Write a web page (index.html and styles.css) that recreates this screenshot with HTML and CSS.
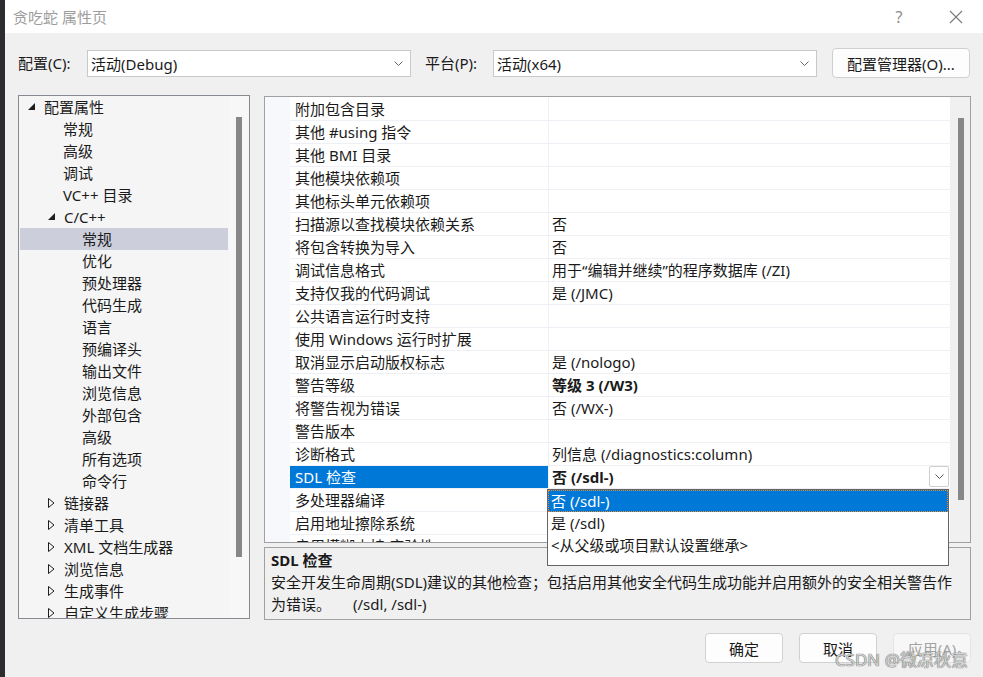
FILE: index.html
```html
<!DOCTYPE html>
<html>
<head>
    <meta charset="UTF-8">
    <title>贪吃蛇 属性页</title>
    <link rel="stylesheet" href="styles.css">
</head>
<body>
<div class="screen">
    <div class="edge"></div>
    <div class="dialog">
        <div class="titlebar">
            <span class="title">贪吃蛇 属性页</span>
            <span class="tb-btn tb-help">?</span>
            <span class="tb-btn tb-close">
                <svg width="14" height="14" viewBox="0 0 14 14"><path d="M1 1 L13 13 M13 1 L1 13" stroke="#7a7a7a" stroke-width="1.1" fill="none"/></svg>
            </span>
        </div>

        <div class="content">
            <div class="config-row">
                <span class="lbl">配置(C):</span>
                <div class="combo">
                    <span class="combo-text">活动(Debug)</span>
                    <svg class="chev" width="9" height="5" viewBox="0 0 9 5"><path d="M0.5 0.5 L4.5 4.5 L8.5 0.5" stroke="#666" fill="none"/></svg>
                </div>
                <span class="lbl lbl-platform">平台(P):</span>
                <div class="combo">
                    <span class="combo-text">活动(x64)</span>
                    <svg class="chev" width="9" height="5" viewBox="0 0 9 5"><path d="M0.5 0.5 L4.5 4.5 L8.5 0.5" stroke="#666" fill="none"/></svg>
                </div>
                <button class="btn btn-manager">配置管理器(O)...</button>
            </div>

            <div class="panels">
                <!-- left tree -->
                <div class="tree">
                    <div class="tree-list">
                        <div class="item lv1"><span class="twisty"><svg width="8" height="8" viewBox="0 0 8 8"><path d="M7 0 L7 7 L0 7 Z" fill="#1e1e1e"/></svg></span>配置属性</div>
                        <div class="item lv2">常规</div>
                        <div class="item lv2">高级</div>
                        <div class="item lv2">调试</div>
                        <div class="item lv2">VC++ 目录</div>
                        <div class="item lv2x"><span class="twisty"><svg width="8" height="8" viewBox="0 0 8 8"><path d="M7 0 L7 7 L0 7 Z" fill="#1e1e1e"/></svg></span>C/C++</div>
                        <div class="item lv3 selected">常规</div>
                        <div class="item lv3">优化</div>
                        <div class="item lv3">预处理器</div>
                        <div class="item lv3">代码生成</div>
                        <div class="item lv3">语言</div>
                        <div class="item lv3">预编译头</div>
                        <div class="item lv3">输出文件</div>
                        <div class="item lv3">浏览信息</div>
                        <div class="item lv3">外部包含</div>
                        <div class="item lv3">高级</div>
                        <div class="item lv3">所有选项</div>
                        <div class="item lv3">命令行</div>
                        <div class="item lv2x"><span class="twisty"><svg width="7" height="10" viewBox="0 0 7 10"><path d="M0.5 0.5 L6 5 L0.5 9.5 Z" fill="none" stroke="#1e1e1e"/></svg></span>链接器</div>
                        <div class="item lv2x"><span class="twisty"><svg width="7" height="10" viewBox="0 0 7 10"><path d="M0.5 0.5 L6 5 L0.5 9.5 Z" fill="none" stroke="#1e1e1e"/></svg></span>清单工具</div>
                        <div class="item lv2x"><span class="twisty"><svg width="7" height="10" viewBox="0 0 7 10"><path d="M0.5 0.5 L6 5 L0.5 9.5 Z" fill="none" stroke="#1e1e1e"/></svg></span>XML 文档生成器</div>
                        <div class="item lv2x"><span class="twisty"><svg width="7" height="10" viewBox="0 0 7 10"><path d="M0.5 0.5 L6 5 L0.5 9.5 Z" fill="none" stroke="#1e1e1e"/></svg></span>浏览信息</div>
                        <div class="item lv2x"><span class="twisty"><svg width="7" height="10" viewBox="0 0 7 10"><path d="M0.5 0.5 L6 5 L0.5 9.5 Z" fill="none" stroke="#1e1e1e"/></svg></span>生成事件</div>
                        <div class="item lv2x"><span class="twisty"><svg width="7" height="10" viewBox="0 0 7 10"><path d="M0.5 0.5 L6 5 L0.5 9.5 Z" fill="none" stroke="#1e1e1e"/></svg></span>自定义生成步骤</div>
                    </div>
                    <div class="vscroll tree-scroll"><div class="thumb"></div></div>
                </div>

                <!-- right side -->
                <div class="right">
                    <div class="grid">
                        <div class="gutter"></div>
                        <div class="rows">
                            <div class="row"><div class="name">附加包含目录</div><div class="value"></div></div>
                            <div class="row"><div class="name">其他 #using 指令</div><div class="value"></div></div>
                            <div class="row"><div class="name">其他 BMI 目录</div><div class="value"></div></div>
                            <div class="row"><div class="name">其他模块依赖项</div><div class="value"></div></div>
                            <div class="row"><div class="name">其他标头单元依赖项</div><div class="value"></div></div>
                            <div class="row"><div class="name">扫描源以查找模块依赖关系</div><div class="value">否</div></div>
                            <div class="row"><div class="name">将包含转换为导入</div><div class="value">否</div></div>
                            <div class="row"><div class="name">调试信息格式</div><div class="value">用于“编辑并继续”的程序数据库 (/ZI)</div></div>
                            <div class="row"><div class="name">支持仅我的代码调试</div><div class="value">是 (/JMC)</div></div>
                            <div class="row"><div class="name">公共语言运行时支持</div><div class="value"></div></div>
                            <div class="row"><div class="name">使用 Windows 运行时扩展</div><div class="value"></div></div>
                            <div class="row"><div class="name">取消显示启动版权标志</div><div class="value">是 (/nologo)</div></div>
                            <div class="row"><div class="name">警告等级</div><div class="value bold">等级 3 (/W3)</div></div>
                            <div class="row"><div class="name">将警告视为错误</div><div class="value">否 (/WX-)</div></div>
                            <div class="row"><div class="name">警告版本</div><div class="value"></div></div>
                            <div class="row"><div class="name">诊断格式</div><div class="value">列信息 (/diagnostics:column)</div></div>
                            <div class="row active">
                                <div class="name">SDL 检查</div>
                                <div class="value bold">
                                    <span class="value-text">否 (/sdl-)</span>
                                    <span class="drop-btn"><svg width="9" height="5" viewBox="0 0 9 5"><path d="M0.5 0.5 L4.5 4.5 L8.5 0.5" stroke="#555" fill="none"/></svg></span>
                                </div>
                            </div>
                            <div class="row"><div class="name">多处理器编译</div><div class="value"></div></div>
                            <div class="row"><div class="name">启用地址擦除系统</div><div class="value"></div></div>
                            <div class="row"><div class="name">启用模糊支持(实验性)</div><div class="value"></div></div>
                        </div>
                        <div class="vscroll grid-scroll"><div class="thumb"></div></div>
                    </div>

                    <div class="help">
                        <div class="help-title">SDL 检查</div>
                        <div class="help-text">安全开发生命周期(SDL)建议的其他检查；包括启用其他安全代码生成功能并启用额外的安全相关警告作</div>
                        <div class="help-text">为错误。<span class="tab"></span>(/sdl, /sdl-)</div>
                    </div>

                    <div class="drop-list">
                        <div class="opt picked">否 (/sdl-)</div>
                        <div class="opt">是 (/sdl)</div>
                        <div class="opt">&lt;从父级或项目默认设置继承&gt;</div>
                    </div>
                </div>
            </div>

            <div class="actions">
                <button class="btn btn-act">确定</button>
                <button class="btn btn-act">取消</button>
                <button class="btn btn-act disabled">应用(A)</button>
            </div>
        </div>
    </div>
    <div class="watermark">CSDN @微凉秋意</div>
</div>
</body>
</html>
```

FILE: styles.css
```css
* {
    box-sizing: border-box;
}

html, body {
    margin: 0;
    padding: 0;
}

body {
    width: 983px;
    height: 677px;
    overflow: hidden;
    background: #f0f0f0;
    color: #1a1a1a;
    font-family: "Noto Sans", "Noto Sans CJK SC", sans-serif;
    font-size: 15px;
}

.screen {
    position: relative;
    display: flex;
    height: 677px;
}

.edge {
    width: 5px;
    background: #2b2d30;
}

.dialog {
    flex: 1;
    display: flex;
    flex-direction: column;
    background: #f0f0f0;
}

/* title bar */
.titlebar {
    height: 33px;
    background: #fff;
    display: flex;
    align-items: center;
    padding-left: 8px;
}

.title {
    color: #9d9d9d;
    font-size: 15px;
}

.tb-btn {
    width: 46px;
    height: 33px;
    display: flex;
    align-items: center;
    justify-content: center;
    color: #8c8c8c;
    font-size: 16px;
}

.tb-help {
    margin-left: auto;
    margin-right: 11px;
}

.tb-close {
    margin-right: 4px;
}

/* content */
.content {
    flex: 1;
    display: flex;
    flex-direction: column;
    padding: 15px 12px 0 13px;
}

.config-row {
    display: flex;
    align-items: center;
    height: 30px;
}

.lbl {
    width: 69px;
    line-height: 20px;
}

.lbl-platform {
    width: 68px;
    margin-left: 14px;
}

.combo {
    width: 324px;
    height: 27px;
    background: #fff;
    border: 1px solid #c9c9c9;
    display: flex;
    align-items: center;
    padding: 0 7px 0 3px;
}

.combo-text {
    flex: 1;
}

.btn {
    font-family: inherit;
    font-size: 15px;
    color: #1a1a1a;
    background: #fdfdfd;
    border: 1px solid #d0d0d0;
    border-radius: 4px;
    padding: 0;
}

.btn-manager {
    width: 138px;
    height: 30px;
    margin-left: 15px;
}

/* panels */
.panels {
    display: flex;
    gap: 14px;
    height: 525px;
    margin-top: 17px;
}

.tree {
    width: 232px;
    height: 524px;
    border: 1px solid #868a91;
    background: #f5f5f5;
    display: flex;
    overflow: hidden;
}

.tree-list {
    width: 210px;
    padding-left: 1px;
}

.item {
    height: 22px;
    line-height: 22px;
    white-space: nowrap;
    display: flex;
    align-items: center;
}

.twisty {
    width: 16px;
    display: flex;
    align-items: center;
}

.lv1 {
    padding-left: 8px;
}

.lv2 {
    padding-left: 43px;
}

.lv2x {
    padding-left: 28px;
}

.lv3 {
    padding-left: 62px;
}

.item.selected {
    background: #cccedb;
    width: 208px;
}

.vscroll {
    width: 20px;
    flex-shrink: 0;
}

.tree-scroll {
    background: #f7f7f7;
}

.thumb {
    width: 6px;
    background: #878787;
}

.tree-scroll .thumb {
    margin: 21px 0 0 7px;
    height: 440px;
}

.right {
    position: relative;
    width: 707px;
    margin-top: 1px;
}

.grid {
    height: 447px;
    border: 1px solid #a0a0a0;
    background: #fff;
    display: flex;
    overflow: hidden;
}

.gutter {
    width: 25px;
    background: #f6f8fc;
    flex-shrink: 0;
}

.rows {
    width: 660px;
    padding-top: 1px;
}

.row {
    display: flex;
    height: 23px;
    border-bottom: 1px solid #eef0f6;
}

.name {
    width: 259px;
    border-right: 1px solid #eef0f6;
    padding-left: 5px;
    line-height: 22px;
    white-space: nowrap;
}

.value {
    flex: 1;
    padding-left: 3px;
    line-height: 22px;
    white-space: nowrap;
    display: flex;
}

.bold {
    font-weight: bold;
}

.row.active .name {
    background: #0078d7;
    color: #fff;
}

.value-text {
    flex: 1;
}

.drop-btn {
    width: 20px;
    height: 21px;
    margin-right: 1px;
    border: 1px solid #cfcfcf;
    border-radius: 2px;
    background: #fff;
    display: flex;
    align-items: center;
    justify-content: center;
}

.grid-scroll {
    background: #f0f0f0;
}

.grid-scroll .thumb {
    margin: 21px 0 0 8px;
    height: 382px;
}

.help {
    margin-top: 4px;
    height: 73px;
    border: 1px solid #a0a0a0;
    padding: 1px 6px;
}

.help-title {
    font-weight: bold;
    line-height: 22px;
}

.help-text {
    line-height: 22px;
    white-space: nowrap;
}

.tab {
    display: inline-block;
    width: 22px;
}

/* dropdown list opened over the grid */
.drop-list {
    position: absolute;
    left: 283px;
    top: 393px;
    width: 402px;
    height: 77px;
    background: #fff;
    border: 1px solid #646464;
}

.opt {
    height: 22px;
    line-height: 20px;
    padding-left: 2px;
    border: 1px solid transparent;
    white-space: nowrap;
}

.opt.picked {
    background: #0078d7;
    color: #fff;
    border: 1px dotted #e8892b;
}

/* buttons */
.actions {
    display: flex;
    justify-content: flex-end;
    gap: 16px;
    margin-top: 13px;
}

.btn-act {
    width: 78px;
    height: 30px;
}

.btn-act.disabled {
    color: #a3a3a3;
    background: #f7f7f7;
    border-color: #e3e3e3;
}

.watermark {
    position: absolute;
    right: 15px;
    bottom: 6px;
    font-size: 17px;
    color: rgba(215, 215, 215, 0.95);
    text-shadow: 0 0 1px rgba(70, 70, 70, 0.75), 0 0 1px rgba(70, 70, 70, 0.75);
}
```
